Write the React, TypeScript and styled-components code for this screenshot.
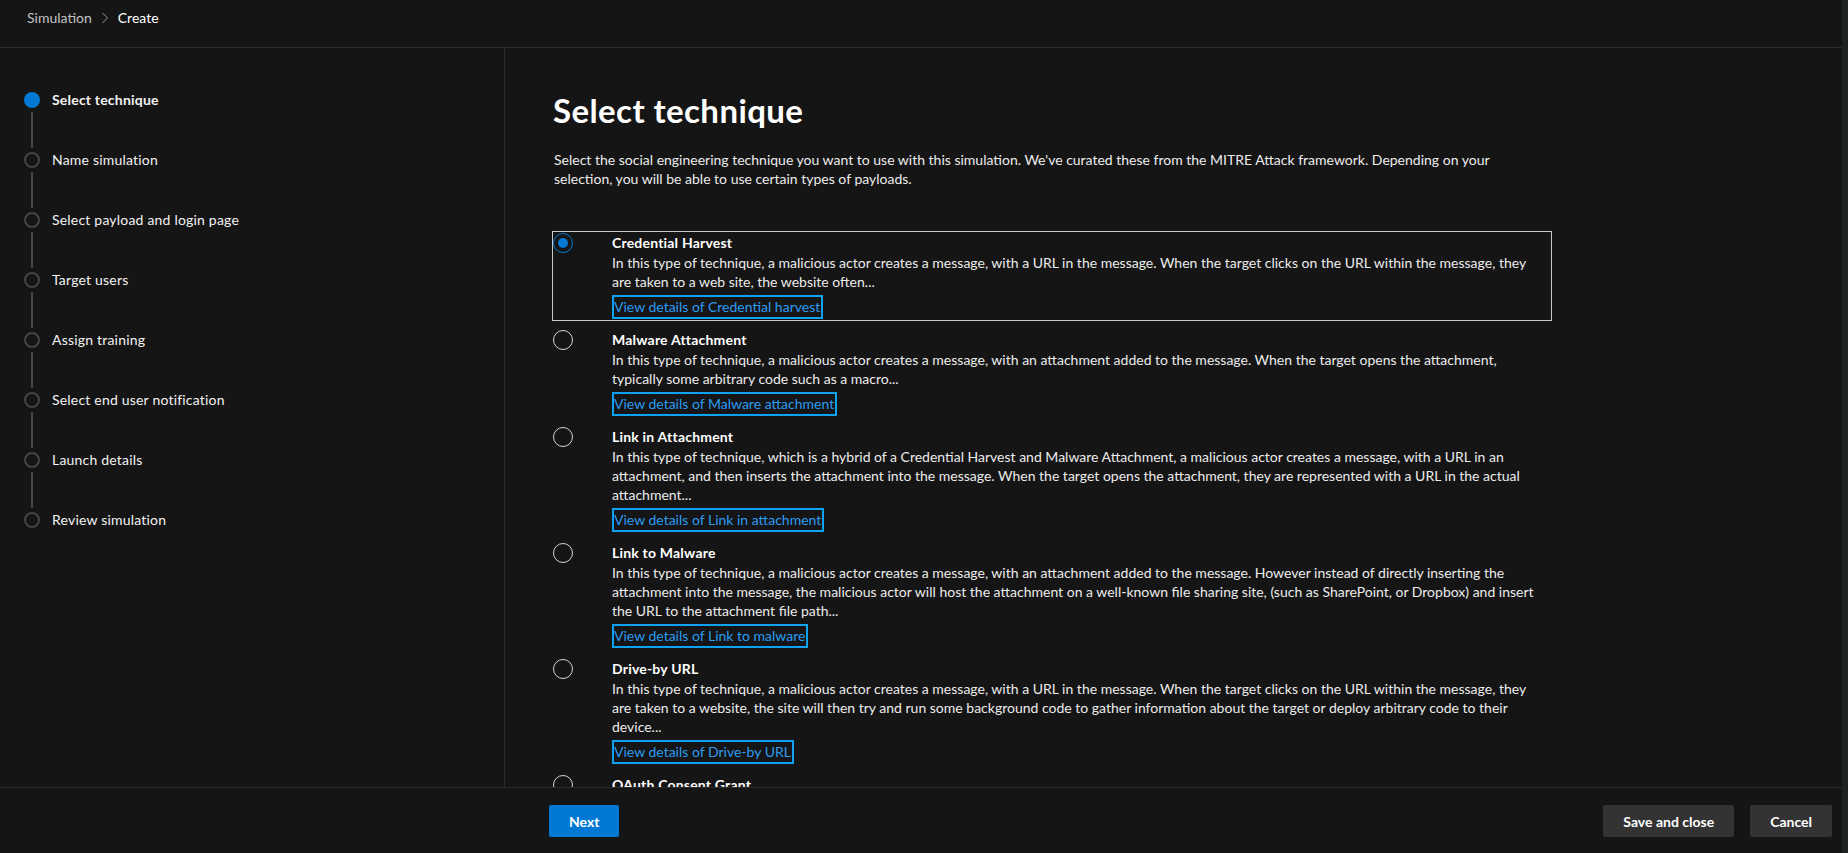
import React from "react";
import styled, { createGlobalStyle, css } from "styled-components";

const GlobalStyle = createGlobalStyle`
  html, body { margin: 0; padding: 0; height: 100%; }
  body {
    background: #151515;
    color: #f0f0f0;
    font-family: "Segoe UI", Lato, "Liberation Sans", sans-serif;
    font-size: 14px;
    overflow: hidden;
  }
  #root { height: 100%; }
  * { box-sizing: border-box; }
`;

const Page = styled.div`
  display: flex;
  height: 853px;
  width: 100%;
`;

const Shell = styled.div`
  flex: 1;
  display: flex;
  flex-direction: column;
  min-width: 0;
`;

const ScrollStrip = styled.div`
  width: 6px;
  background: #1e2121;
`;

const TopBar = styled.header`
  height: 48px;
  border-bottom: 1px solid #2b2b2b;
  padding: 8px 0 0 27px;
  display: flex;
  align-items: flex-start;
`;

const Crumb = styled.span<{ $current?: boolean }>`
  line-height: 20px;
  font-size: 14px;
  color: ${(p) => (p.$current ? "#ffffff" : "#c2c2c2")};
`;

const CrumbSep = styled.span`
  display: inline-flex;
  width: 26px;
  height: 20px;
  align-items: center;
  justify-content: center;
`;

const Body = styled.div`
  flex: 1;
  display: grid;
  grid-template-columns: 505px 1fr;
  min-height: 0;
`;

const Nav = styled.nav`
  border-right: 1px solid #2b2b2b;
  padding: 44px 0 0 24px;
`;

const Step = styled.div`
  display: flex;
  align-items: flex-start;
`;

const MarkerCol = styled.div`
  display: flex;
  flex-direction: column;
  align-items: center;
  width: 16px;
`;

const Dot = styled.span<{ $active?: boolean }>`
  width: 16px;
  height: 16px;
  border-radius: 50%;
  ${(p) =>
    p.$active
      ? css`background: #0078d4;`
      : css`border: 2px solid #444444;`}
`;

const Connector = styled.span`
  width: 2px;
  height: 36px;
  margin: 4px 0;
  background: #474747;
`;

const StepLabel = styled.span<{ $active?: boolean }>`
  margin-left: 12px;
  line-height: 16px;
  font-size: 14px;
  letter-spacing: 0.2px;
  color: #f2f2f2;
  font-weight: ${(p) => (p.$active ? 700 : 400)};
`;

const Main = styled.main`
  overflow: hidden;
  padding: 42px 0 0 47px;
`;

const Content = styled.div`
  width: 1000px;
`;

const Heading = styled.h1`
  margin: 0;
  font-size: 33px;
  line-height: 40px;
  font-weight: 700;
  letter-spacing: 0.4px;
  color: #ffffff;
  padding-left: 1px;
`;

const Intro = styled.p`
  margin: 20px 0 0;
  max-width: 962px;
  font-size: 14px;
  line-height: 19px;
  color: #ececec;
  padding-left: 2px;
`;

const OptionList = styled.div`
  margin-top: 43px;
  display: flex;
  flex-direction: column;
  gap: 7px;
`;

const Option = styled.div<{ $focused?: boolean }>`
  display: grid;
  grid-template-columns: 59px 1fr;
  padding: 1px 0;
  border: 1px solid ${(p) => (p.$focused ? "#c8c8c8" : "transparent")};
`;

const Radio = styled.span<{ $checked?: boolean }>`
  width: 20px;
  height: 20px;
  border-radius: 50%;
  display: flex;
  align-items: center;
  justify-content: center;
  border: 1px solid ${(p) => (p.$checked ? "#0078d4" : "#d6d6d6")};
  &::after {
    content: "";
    width: 10px;
    height: 10px;
    border-radius: 50%;
    background: ${(p) => (p.$checked ? "#0078d4" : "transparent")};
  }
`;

const OptionText = styled.div`
  display: flex;
  flex-direction: column;
  align-items: flex-start;
  padding-right: 8px;
`;

const OptionTitle = styled.div`
  font-weight: 700;
  line-height: 20px;
  letter-spacing: 0.2px;
  color: #ffffff;
`;

const OptionDesc = styled.div`
  line-height: 19px;
  color: #ececec;
`;

const DetailsLink = styled.a`
  margin-top: 4px;
  display: inline-block;
  border: 2px solid #0ea2f0;
  padding: 0 1px 0 0;
  line-height: 20px;
  color: #2b9cf2;
  text-decoration: none;
  cursor: pointer;
`;

const Footer = styled.footer`
  height: 66px;
  border-top: 1px solid #2b2b2b;
  display: grid;
  grid-template-columns: 505px 1fr;
`;

const FooterActions = styled.div`
  display: flex;
  align-items: flex-start;
  padding: 17px 10px 0 44px;
  gap: 16px;
`;

const Button = styled.button<{ $primary?: boolean }>`
  height: 32px;
  padding: 0 20px;
  border: none;
  border-radius: 2px;
  font-family: inherit;
  font-size: 14px;
  font-weight: 700;
  color: #ffffff;
  background: ${(p) => (p.$primary ? "#0078d4" : "#333333")};
  cursor: pointer;
`;

const Spacer = styled.div`
  flex: 1;
`;

const steps = [
  "Select technique",
  "Name simulation",
  "Select payload and login page",
  "Target users",
  "Assign training",
  "Select end user notification",
  "Launch details",
  "Review simulation",
];

const options = [
  {
    title: "Credential Harvest",
    desc: "In this type of technique, a malicious actor creates a message, with a URL in the message. When the target clicks on the URL within the message, they are taken to a web site, the website often...",
    link: "View details of Credential harvest",
  },
  {
    title: "Malware Attachment",
    desc: "In this type of technique, a malicious actor creates a message, with an attachment added to the message. When the target opens the attachment, typically some arbitrary code such as a macro...",
    link: "View details of Malware attachment",
  },
  {
    title: "Link in Attachment",
    desc: "In this type of technique, which is a hybrid of a Credential Harvest and Malware Attachment, a malicious actor creates a message, with a URL in an attachment, and then inserts the attachment into the message. When the target opens the attachment, they are represented with a URL in the actual attachment...",
    link: "View details of Link in attachment",
  },
  {
    title: "Link to Malware",
    desc: "In this type of technique, a malicious actor creates a message, with an attachment added to the message. However instead of directly inserting the attachment into the message, the malicious actor will host the attachment on a well-known file sharing site, (such as SharePoint, or Dropbox) and insert the URL to the attachment file path...",
    link: "View details of Link to malware",
  },
  {
    title: "Drive-by URL",
    desc: "In this type of technique, a malicious actor creates a message, with a URL in the message. When the target clicks on the URL within the message, they are taken to a website, the site will then try and run some background code to gather information about the target or deploy arbitrary code to their device...",
    link: "View details of Drive-by URL",
  },
  {
    title: "OAuth Consent Grant",
    desc: "In this type of technique, a malicious actor has created an Azure Application that requests the user to grant the application permissions to access their data...",
    link: "View details of OAuth consent grant",
  },
];

const Chevron = () => (
  <svg width="8" height="12" viewBox="0 0 8 12" fill="none">
    <path d="M1.5 1L6.5 6L1.5 11" stroke="#9a9a9a" strokeWidth="1" />
  </svg>
);

export default function App() {
  return (
    <>
      <GlobalStyle />
      <Page>
        <Shell>
          <TopBar>
            <Crumb>Simulation</Crumb>
            <CrumbSep>
              <Chevron />
            </CrumbSep>
            <Crumb $current>Create</Crumb>
          </TopBar>
          <Body>
            <Nav>
              {steps.map((s, i) => (
                <Step key={s}>
                  <MarkerCol>
                    <Dot $active={i === 0} />
                    {i < steps.length - 1 && <Connector />}
                  </MarkerCol>
                  <StepLabel $active={i === 0}>{s}</StepLabel>
                </Step>
              ))}
            </Nav>
            <Main>
              <Content>
                <Heading>Select technique</Heading>
                <Intro>
                  Select the social engineering technique you want to use with this simulation. We've curated
                  these from the MITRE Attack framework. Depending on your selection, you will be able to use
                  certain types of payloads.
                </Intro>
                <OptionList>
                  {options.map((o, i) => (
                    <Option key={o.title} $focused={i === 0}>
                      <Radio $checked={i === 0} />
                      <OptionText>
                        <OptionTitle>{o.title}</OptionTitle>
                        <OptionDesc>{o.desc}</OptionDesc>
                        <DetailsLink>{o.link}</DetailsLink>
                      </OptionText>
                    </Option>
                  ))}
                </OptionList>
              </Content>
            </Main>
          </Body>
          <Footer>
            <div />
            <FooterActions>
              <Button $primary>Next</Button>
              <Spacer />
              <Button>Save and close</Button>
              <Button>Cancel</Button>
            </FooterActions>
          </Footer>
        </Shell>
        <ScrollStrip />
      </Page>
    </>
  );
}
